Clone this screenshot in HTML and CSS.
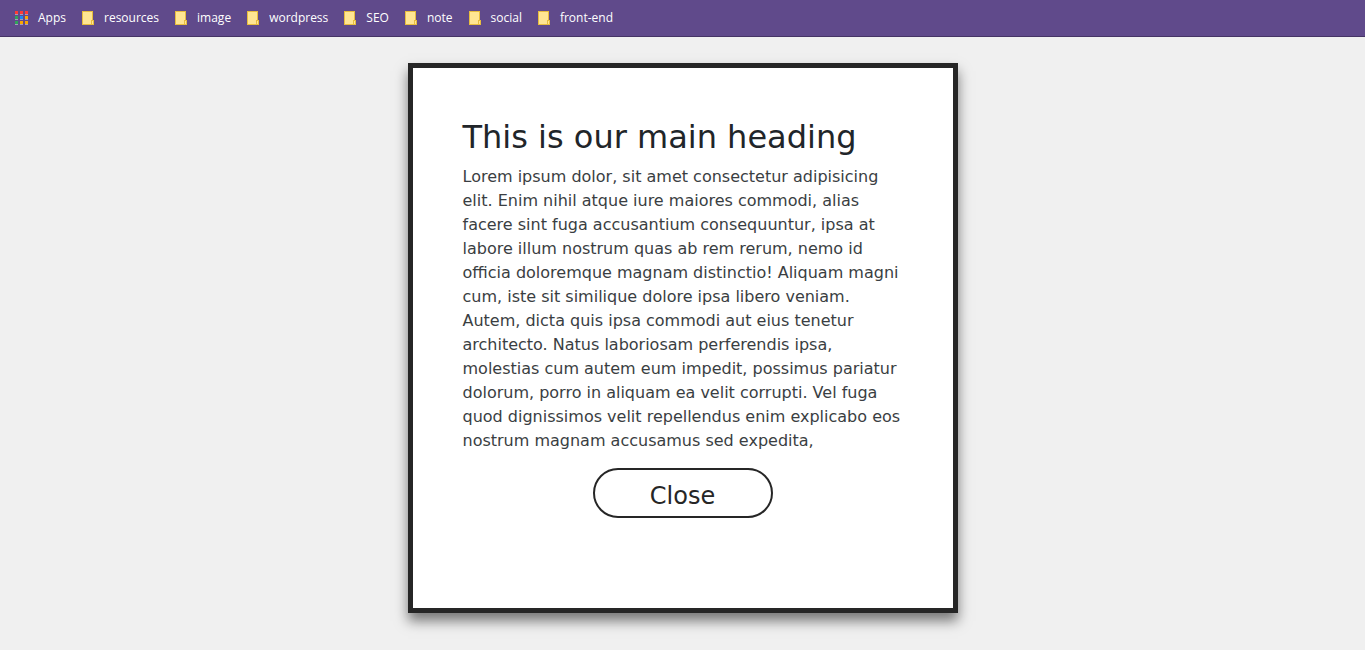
FILE: index.html
```html
<!DOCTYPE html>
<html lang="en">
<head>
<meta charset="utf-8">
<title>Modal</title>
<link rel="stylesheet" href="styles.css">
</head>
<body>
<svg class="defs" aria-hidden="true">
  <symbol id="folder" viewBox="0 0 12 14">
    <path fill="#e8bd3e" d="M0 0h11v9h1v5H0z"/>
    <path fill="#ffe593" d="M1 1h9v8H9v4H1zM10 10h1v3h-1z"/>
  </symbol>
</svg>
<nav class="bookmarks" aria-label="Bookmarks">
  <a class="bookmark apps" href="#"><svg class="apps-icon" viewBox="0 0 13 14" shape-rendering="crispEdges" aria-hidden="true">
    <path fill="#ff3a34" d="M0 0h3v3H0zM5 0h3v3H5zM10 0h3v3h-3z"/>
    <path fill="#30a35a" d="M0 5h3v3H0zM0 10h3v3H0z"/>
    <path fill="#1b88f5" d="M5 5h3v3H5z"/>
    <path fill="#f9a600" d="M10 5h3v3h-3zM5 10h3v3H5zM10 10h3v3h-3z"/>
    <path fill="#a69abb" d="M0 3h3v1H0zM5 3h3v1H5zM10 3h3v1h-3zM0 8h3v1H0zM5 8h3v1H5zM10 8h3v1h-3zM0 13h3v1H0zM5 13h3v1H5zM10 13h3v1h-3z"/>
  </svg>Apps</a>
  <a class="bookmark" href="#"><svg class="folder-icon" shape-rendering="crispEdges" aria-hidden="true"><use href="#folder"/></svg>resources</a>
  <a class="bookmark" href="#"><svg class="folder-icon" shape-rendering="crispEdges" aria-hidden="true"><use href="#folder"/></svg>image</a>
  <a class="bookmark" href="#"><svg class="folder-icon" shape-rendering="crispEdges" aria-hidden="true"><use href="#folder"/></svg>wordpress</a>
  <a class="bookmark" href="#"><svg class="folder-icon" shape-rendering="crispEdges" aria-hidden="true"><use href="#folder"/></svg>SEO</a>
  <a class="bookmark" href="#"><svg class="folder-icon" shape-rendering="crispEdges" aria-hidden="true"><use href="#folder"/></svg>note</a>
  <a class="bookmark" href="#"><svg class="folder-icon" shape-rendering="crispEdges" aria-hidden="true"><use href="#folder"/></svg>social</a>
  <a class="bookmark" href="#"><svg class="folder-icon" shape-rendering="crispEdges" aria-hidden="true"><use href="#folder"/></svg>front-end</a>
</nav>
<main class="page">
  <section class="modal">
    <h1 class="modal-title">This is our main heading</h1>
    <p class="modal-text">Lorem ipsum dolor, sit amet consectetur adipisicing elit. Enim nihil atque iure maiores commodi, alias facere sint fuga accusantium consequuntur, ipsa at labore illum nostrum quas ab rem rerum, nemo id officia doloremque magnam distinctio! Aliquam magni cum, iste sit similique dolore ipsa libero veniam. Autem, dicta quis ipsa commodi aut eius tenetur architecto. Natus laboriosam perferendis ipsa, molestias cum autem eum impedit, possimus pariatur dolorum, porro in aliquam ea velit corrupti. Vel fuga quod dignissimos velit repellendus enim explicabo eos nostrum magnam accusamus sed expedita,</p>
    <button class="modal-close" type="button">Close</button>
  </section>
</main>
</body>
</html>
```
FILE: styles.css
```css
* {
  box-sizing: border-box;
}

body {
  margin: 0;
  background: #f0f0f0;
  color: #212529;
  font-family: Verdana, "DejaVu Sans", sans-serif;
  font-size: 16px;
  line-height: 24px;
}

.defs {
  display: none;
}

.bookmarks {
  display: flex;
  align-items: center;
  gap: 16px;
  height: 37px;
  padding: 0 15px;
  border-bottom: 1px solid #453465;
  background: #604a8b;
  font-family: "Open Sans", sans-serif;
  font-size: 12px;
}

.bookmark {
  display: flex;
  align-items: center;
  gap: 10px;
  color: #fff;
  text-decoration: none;
}

.apps-icon {
  width: 13px;
  height: 14px;
}

.folder-icon {
  width: 12px;
  height: 14px;
}

.page {
  display: flex;
  justify-content: center;
  padding: 26px 16px 36px;
}

.modal {
  width: 100%;
  max-width: 550px;
  min-height: 550px;
  padding: 50px;
  border: 5px solid #262626;
  background: #fff;
  box-shadow: 0 8px 12px rgba(0, 0, 0, 0.5);
}

.modal-title {
  margin: 0 0 8px;
  font-size: 32px;
  font-weight: 400;
  line-height: 39px;
}

.modal-text {
  margin: 0 0 15px;
  color: #3a3e42;
}

.modal-close {
  display: block;
  width: 180px;
  height: 50px;
  margin: 0 auto;
  padding: 5px 0 0;
  border: 2px solid #262626;
  border-radius: 25px;
  background: #fff;
  color: #262626;
  font-family: inherit;
  font-size: 24px;
}
```
